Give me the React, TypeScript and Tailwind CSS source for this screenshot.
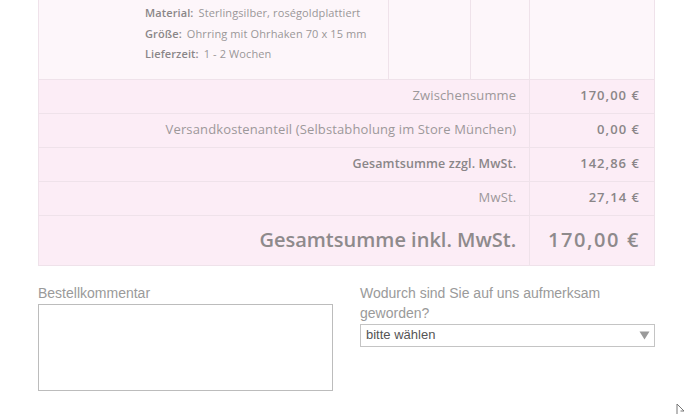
const rows = [
  { label: 'Zwischensumme', value: '170,00 €', bold: false },
  { label: 'Versandkostenanteil (Selbstabholung im Store München)', value: '0,00 €', bold: false },
  { label: 'Gesamtsumme zzgl. MwSt.', value: '142,86 €', bold: true },
  { label: 'MwSt.', value: '27,14 €', bold: false },
]

const details = [
  { label: 'Material:', value: 'Sterlingsilber, roségoldplattiert' },
  { label: 'Größe:', value: 'Ohrring mit Ohrhaken 70 x 15 mm' },
  { label: 'Lieferzeit:', value: '1 - 2 Wochen' },
]

export default function App() {
  return (
    <div className="relative w-[688px] h-[414px] bg-white overflow-hidden">
      <div className="pl-[38px] pr-[33px]">
        <table
          className="w-[617px] border-collapse text-[#8e8a8c]"
          style={{ fontFamily: '"Open Sans", "Noto Sans", sans-serif' }}
        >
          <tbody>
            {/* item row */}
            <tr className="h-[79px] bg-[#fdf6fa]">
              <td className="w-[350px] border-l border-r border-b border-[#efe2ea] align-top pl-[106px] pt-[3px]">
                {details.map((d) => (
                  <div key={d.label} className="text-[11px] leading-[20.5px] whitespace-nowrap tracking-[0.01em]">
                    <span className="font-semibold text-[#8a8688]">{d.label}</span>
                    <span className="ml-[5px] text-[#9a9698]">{d.value}</span>
                  </div>
                ))}
              </td>
              <td className="w-[82px] border-r border-b border-[#efe2ea]" />
              <td className="w-[60px] border-r border-b border-[#efe2ea]" />
              <td className="w-[125px] border-r border-b border-[#efe2ea]" />
            </tr>

            {/* summary */}
            {rows.map((r) => (
              <tr key={r.label} className="h-[34px] bg-[#fcedf6]">
                <td
                  colSpan={3}
                  className={`border-l border-r border-b border-[#efe2ea] text-right pr-[13px] whitespace-nowrap tracking-[0.01em] ${
                    r.bold ? 'font-semibold text-[#8a8688] text-[12.5px]' : 'text-[13px] text-[#9c989a]'
                  }`}
                >
                  {r.label}
                </td>
                <td className="border-r border-b border-[#efe2ea] text-right pr-[14px] text-[13px] font-semibold tracking-[0.08em] text-[#8a8688]">
                  {r.value}
                </td>
              </tr>
            ))}
            <tr className="h-[50px] bg-[#fcedf6]">
              <td
                colSpan={3}
                className="border-l border-r border-b border-[#efe2ea] text-right pr-[13px] text-[20px] font-semibold text-[#8e8a8c] whitespace-nowrap"
              >
                Gesamtsumme inkl. MwSt.
              </td>
              <td className="border-r border-b border-[#efe2ea] text-right pr-[14px] text-[20px] font-semibold tracking-[0.08em] text-[#8e8a8c]">
                170,00 €
              </td>
            </tr>
          </tbody>
        </table>

        {/* comment + source */}
        <div
          className="flex gap-[27px] mt-[19px] text-[14px] text-[#9a9a9a]"
          style={{ fontFamily: '"Liberation Sans", Arial, sans-serif' }}
        >
          <div className="w-[295px]">
            <div className="leading-[17px]">Bestellkommentar</div>
            <textarea className="mt-[2px] block w-[295px] h-[87px] border border-[#bcbcbc] resize-none outline-none" />
          </div>
          <div className="w-[295px] -mt-[2px]">
            <div className="leading-[20px]">Wodurch sind Sie auf uns aufmerksam geworden?</div>
            <div className="mt-[1px] h-[23px] border border-[#c4c4c4] flex items-center justify-between pl-[5px] pr-[4px] text-[13px] text-[#555]">
              <span>bitte wählen</span>
              <svg width="11" height="10" viewBox="0 0 11 10">
                <path d="M0.5 1.5 L10.5 1.5 L5.5 9.5 Z" fill="#9a9a9a" />
              </svg>
            </div>
          </div>
        </div>
      </div>

      {/* mouse pointer */}
      <svg className="absolute left-[676px] top-[403px]" width="10" height="12" viewBox="0 0 10 12">
        <path d="M1 1 L1 11 M1 1 L8 8 L4.5 8" fill="none" stroke="#777" strokeWidth="1" />
      </svg>
    </div>
  )
}
